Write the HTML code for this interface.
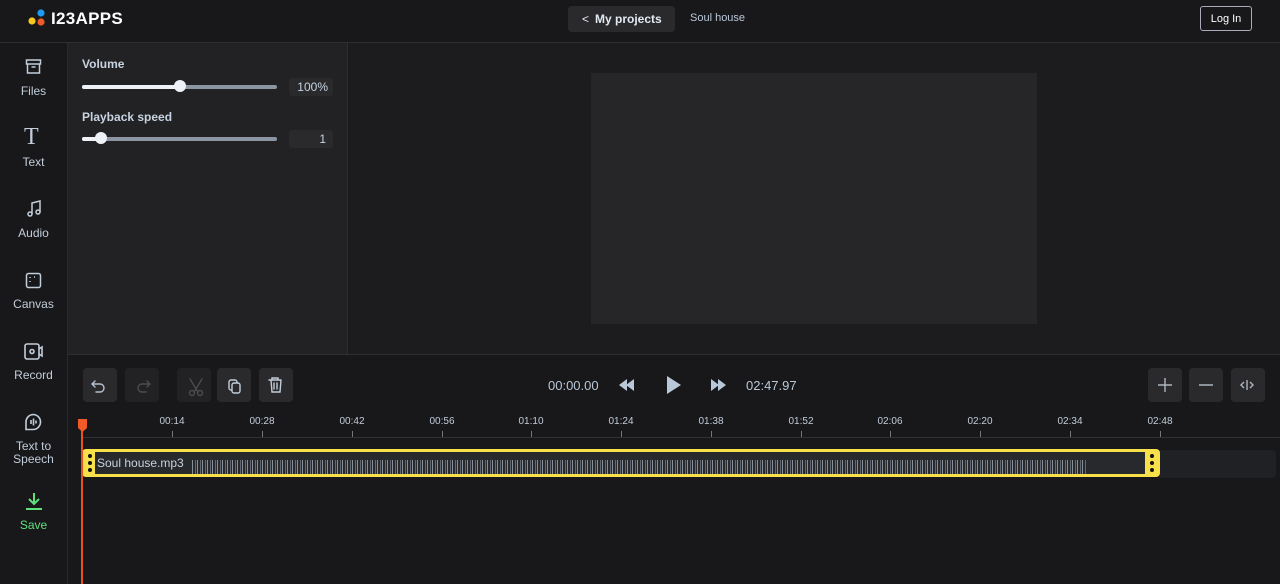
<!DOCTYPE html><html><head><style>
*{box-sizing:border-box;margin:0;padding:0}
body{width:1280px;height:584px;background:#18181b;font-family:"Liberation Sans",sans-serif;color:#c9d3df;position:relative;overflow:hidden}
.a{position:absolute}
.hdr{left:0;top:0;width:1280px;height:43px;border-bottom:1px solid #2e2e31;background:#18181a}
.side{left:0;top:43px;width:68px;height:541px;border-right:1px solid #2a2a2d}
.si{position:absolute;left:0;width:67px;text-align:center;font-size:12px;color:#c2cdda}
.panel{left:68px;top:43px;width:280px;height:311px;background:#222224;border-right:1px solid #2e2e31}
.prev{left:349px;top:43px;width:931px;height:311px;background:#1c1c1e}
.tl{left:68px;top:354px;width:1212px;height:230px;border-top:1px solid #2e2e31;background:#18181a}
.btn{position:absolute;width:34px;height:34px;border-radius:4px;background:#2a2a2d;top:368px}
.tick{position:absolute;top:416px;font-size:10px;color:#c2cdda;transform:translateX(-50%)}
.tk{position:absolute;top:431px;width:1px;height:6px;background:#777}
</style></head><body>
<div class="a hdr"></div>
<svg class="a" style="left:27px;top:9px" width="20" height="18"><circle cx="14" cy="4" r="3.6" fill="#1e9bf0"/><circle cx="5" cy="12" r="3.6" fill="#f8c81c"/><circle cx="14" cy="13" r="3.6" fill="#f05a28"/></svg>
<div class="a" style="left:51px;top:9px;font-size:17px;font-weight:bold;color:#fff;letter-spacing:0.3px">I23APPS</div>
<div class="a" style="left:568px;top:6px;width:107px;height:26px;background:#2a2a2d;border-radius:4px;font-size:12px;font-weight:bold;color:#e3eaf3;padding:6px 0 0 14px"><span style="font-weight:normal;margin-right:6px">&lt;</span>My projects</div>
<div class="a" style="left:690px;top:12px;font-size:11px;color:#b9c8d8">Soul house</div>
<div class="a" style="left:1200px;top:6px;width:52px;height:25px;border:1px solid #aab;border-radius:3px;font-size:11px;color:#fff;text-align:center;line-height:24px">Log In</div>

<div class="a side"></div>
<svg class="a" style="left:25px;top:58px" width="17" height="17" fill="none" stroke="#c2cdda" stroke-width="1.5"><rect x="1.5" y="2" width="14" height="4"/><path d="M2.5 6v9h12V6M6.5 9h4"/></svg>
<div class="si" style="top:84px">Files</div>
<div class="a" style="left:24px;top:124px;font-family:'Liberation Serif';font-size:24px;color:#c2cdda">T</div>
<div class="si" style="top:155px">Text</div>
<svg class="a" style="left:26px;top:200px" width="16" height="18" fill="none" stroke="#c2cdda" stroke-width="1.5"><path d="M6 14V3l8-2v11"/><circle cx="4" cy="14" r="2"/><circle cx="12" cy="12" r="2"/></svg>
<div class="si" style="top:226px">Audio</div>
<svg class="a" style="left:25px;top:272px" width="17" height="17" fill="none" stroke="#c2cdda" stroke-width="1.5"><rect x="1.5" y="1.5" width="14" height="14" rx="2"/><path d="M5 5v1M5 9v1M9 5h1"/></svg>
<div class="si" style="top:297px">Canvas</div>
<svg class="a" style="left:24px;top:343px" width="20" height="17" fill="none" stroke="#c2cdda" stroke-width="1.6"><rect x="1" y="1" width="14" height="15" rx="2"/><circle cx="8" cy="8.5" r="2"/><path d="M15 6l3-2v9l-3-2"/></svg>
<div class="si" style="top:368px">Record</div>
<svg class="a" style="left:24px;top:413px" width="18" height="18" fill="none" stroke="#c2cdda" stroke-width="1.6"><path d="M9 1.5a7.5 7.5 0 1 1 0 15H2v-7A7.5 7.5 0 0 1 9 1.5zM7 7v4M9.5 5.5v7M12 7.5v3"/></svg>
<div class="si" style="top:440px;line-height:13px">Text to<br>Speech</div>
<svg class="a" style="left:24px;top:492px" width="20" height="20" fill="none" stroke="#5ee07a" stroke-width="2"><path d="M10 1v11M5 7l5 5 5-5M2 17h16"/></svg>
<div class="si" style="top:518px;color:#5ee07a">Save</div>

<div class="a panel"></div>
<div class="a" style="left:82px;top:57px;font-size:12px;font-weight:bold;color:#c7d3e0">Volume</div>
<div class="a" style="left:82px;top:85px;width:195px;height:4px;background:#8c96a3;border-radius:2px"></div>
<div class="a" style="left:82px;top:85px;width:98px;height:4px;background:#eef1f5;border-radius:2px"></div>
<div class="a" style="left:174px;top:80px;width:12px;height:12px;background:#eef1f5;border-radius:50%"></div>
<div class="a" style="left:289px;top:78px;width:44px;height:18px;background:#2a2a2d;border-radius:3px;font-size:12px;text-align:right;padding:2px 5px 0 0;color:#c7d3e0">100%</div>
<div class="a" style="left:82px;top:110px;font-size:12px;font-weight:bold;color:#c7d3e0">Playback speed</div>
<div class="a" style="left:82px;top:137px;width:195px;height:4px;background:#8c96a3;border-radius:2px"></div>
<div class="a" style="left:82px;top:137px;width:19px;height:4px;background:#eef1f5;border-radius:2px"></div>
<div class="a" style="left:95px;top:132px;width:12px;height:12px;background:#eef1f5;border-radius:50%"></div>
<div class="a" style="left:289px;top:130px;width:44px;height:18px;background:#2a2a2d;border-radius:3px;font-size:12px;text-align:right;padding:2px 7px 0 0;color:#c7d3e0">1</div>

<div class="a prev"></div>
<div class="a" style="left:591px;top:73px;width:446px;height:251px;background:#262628"></div>

<div class="a tl"></div>
<div class="btn" style="left:83px"></div><div class="btn" style="left:125px;background:#222224"></div><div class="btn" style="left:177px;background:#222224"></div><div class="btn" style="left:217px"></div><div class="btn" style="left:259px"></div>
<svg class="a" style="left:83px;top:368px" width="220" height="34" fill="none" stroke-width="1.4" stroke-linecap="round">
<path d="M12 13l-3 3 3 3M9 16h8a4 4 0 0 1 0 8h-4" stroke="#b5c0cc"/>
<path d="M64 13l3 3-3 3M67 16h-8a4 4 0 0 0 0 8h4" stroke="#4a4c50"/>
<path d="M107 11l8 13M119 11l-8 13" stroke="#4a4c50"/><circle cx="109" cy="25" r="2.5" stroke="#4a4c50"/><circle cx="117" cy="25" r="2.5" stroke="#4a4c50"/>
<rect x="146" y="12" width="8" height="10" rx="2" stroke="#c2cdda"/><rect x="149" y="15" width="8" height="10" rx="2" stroke="#c2cdda" fill="#2a2a2d"/>
<path d="M186 12h12M189 12v-2h6v2M188 12l1 12h8l1-12M191 15v6M194 15v6" stroke="#c2cdda"/>
</svg>
<div class="a" style="left:548px;top:378px;font-size:13px;color:#b9c8d8">00:00.00</div>
<svg class="a" style="left:618px;top:375px" width="112" height="20" fill="#b9c8d8"><path d="M1 10l8-6v12zM8 10l8-6v12z"/><path d="M49 1l14 9-14 9z"/><path d="M93 4l8 6-8 6zM100 4l8 6-8 6z"/></svg>
<div class="a" style="left:746px;top:378px;font-size:13px;color:#b9c8d8">02:47.97</div>
<div class="btn" style="left:1148px"></div><div class="btn" style="left:1189px"></div><div class="btn" style="left:1231px"></div>
<svg class="a" style="left:1148px;top:368px" width="120" height="34" fill="none" stroke="#aeb6c0" stroke-width="1.4"><path d="M17 10v14M10 17h14M51 17h14M99 12v10M96 14l-3 3 3 3M102 14l3 3-3 3"/></svg>

<div class="tick" style="left:172px">00:14</div><div class="tick" style="left:262px">00:28</div><div class="tick" style="left:352px">00:42</div><div class="tick" style="left:442px">00:56</div><div class="tick" style="left:531px">01:10</div><div class="tick" style="left:621px">01:24</div><div class="tick" style="left:711px">01:38</div><div class="tick" style="left:801px">01:52</div><div class="tick" style="left:890px">02:06</div><div class="tick" style="left:980px">02:20</div><div class="tick" style="left:1070px">02:34</div><div class="tick" style="left:1160px">02:48</div>
<div class="tk" style="left:172px"></div><div class="tk" style="left:262px"></div><div class="tk" style="left:352px"></div><div class="tk" style="left:442px"></div><div class="tk" style="left:531px"></div><div class="tk" style="left:621px"></div><div class="tk" style="left:711px"></div><div class="tk" style="left:801px"></div><div class="tk" style="left:890px"></div><div class="tk" style="left:980px"></div><div class="tk" style="left:1070px"></div><div class="tk" style="left:1160px"></div>
<div class="a" style="left:82px;top:437px;width:1198px;height:1px;background:#333"></div>
<div class="a" style="left:1158px;top:450px;width:118px;height:28px;background:#202124;border-radius:4px"></div>
<div class="a" style="left:82px;top:449px;width:1078px;height:28px;background:#f7e04a;border-radius:4px"></div>
<div class="a" style="left:95px;top:452px;width:1050px;height:22px;background:#28292c"></div>
<div class="a" style="left:192px;top:460px;width:895px;height:14px;background:repeating-linear-gradient(90deg,#9ea8b6 0 1px,transparent 1px 3px,#6f7784 3px 4px,transparent 4px 5px);opacity:.8"></div>
<div class="a" style="left:97px;top:456px;font-size:12px;color:#c7d3e0">Soul house.mp3</div>
<svg class="a" style="left:86px;top:452px" width="1072" height="22" fill="#111"><circle cx="4" cy="4" r="2"/><circle cx="4" cy="11" r="2"/><circle cx="4" cy="18" r="2"/><circle cx="1066" cy="4" r="2"/><circle cx="1066" cy="11" r="2"/><circle cx="1066" cy="18" r="2"/></svg>
<div class="a" style="left:81px;top:425px;width:2px;height:159px;background:#e8501e"></div>
<svg class="a" style="left:77px;top:418px" width="11" height="15"><path d="M1 1h9v9l-4.5 4L1 10z" fill="#f05a28"/></svg>
</body></html>
